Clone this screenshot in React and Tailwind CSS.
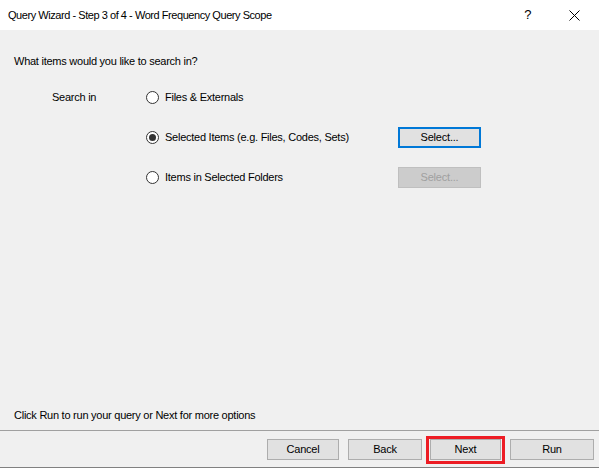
import React from "react";

function Radio({ checked }) {
  return (
    <span className="flex h-[13px] w-[13px] items-center justify-center rounded-full border border-[#333333] bg-white">
      {checked && <span className="h-[7px] w-[7px] rounded-full bg-[#333333]" />}
    </span>
  );
}

function Btn({ children, className = "", disabled, focused }) {
  let look = "border border-[#adadad] bg-[#e1e1e1] text-black ";
  if (disabled) look = "border border-[#bfbfbf] bg-[#cccccc] text-[#a0a0a0] ";
  if (focused) look = "border-2 border-[#0078d7] bg-[#e1e1e1] text-black ";
  return (
    <button
      className={
        "flex h-[21px] items-center justify-center text-[11px] leading-none tracking-[-0.2px] " +
        look +
        className
      }
    >
      {children}
    </button>
  );
}

export default function App() {
  const options = [
    { label: "Files & Externals", checked: false },
    { label: "Selected Items (e.g. Files, Codes, Sets)", checked: true, btn: "active" },
    { label: "Items in Selected Folders", checked: false, btn: "disabled" },
  ];

  return (
    <div
      className="flex h-[468px] w-[599px] flex-col bg-[#f0f0f0] text-[11px] tracking-[-0.25px] text-black"
      style={{ fontFamily: '"Liberation Sans", Arial, sans-serif' }}
    >
      {/* title bar */}
      <div className="flex h-[30px] shrink-0 items-center bg-white pl-[8px] text-[11px] tracking-[-0.45px]">
        <span className="flex-1">Query Wizard - Step 3 of 4 - Word Frequency Query Scope</span>
        <span className="mr-[38px] text-[13px]">?</span>
        <svg width="11" height="11" viewBox="0 0 11 11" className="mr-[19px]">
          <path d="M0.5 0.5 L10.5 10.5 M10.5 0.5 L0.5 10.5" stroke="#000" strokeWidth="1" />
        </svg>
      </div>

      {/* body */}
      <div className="flex flex-1 flex-col pl-[14px] pt-[23px] pb-[7px]">
        <div className="h-[16px] leading-[16px]">What items would you like to search in?</div>

        <div className="mt-[18px] flex flex-col gap-[20px]">
          {options.map((o, i) => (
            <div key={o.label} className="flex h-[20px] items-center">
              <span className="w-[132px] pl-[38px]">{i === 0 ? "Search in" : ""}</span>
              <Radio checked={o.checked} />
              <span className="ml-[6px] w-[233px]">{o.label}</span>
              {o.btn === "active" && (
                <Btn className="w-[83px]" focused>
                  Select...
                </Btn>
              )}
              {o.btn === "disabled" && (
                <Btn className="w-[83px]" disabled>
                  Select...
                </Btn>
              )}
            </div>
          ))}
        </div>

        <div className="mt-auto h-[16px] leading-[16px]">
          Click Run to run your query or Next for more options
        </div>
      </div>

      {/* buttons */}
      <div className="flex h-[38px] shrink-0 items-center justify-end border-t border-b border-t-[#a0a0a0] border-b-[#808080] pr-[5px]">
        <Btn className="w-[72px]">Cancel</Btn>
        <Btn className="ml-[9px] w-[74px]">Back</Btn>
        <div className="relative ml-[8px]">
          <Btn className="w-[71px]">Next</Btn>
          <div className="absolute -top-[3px] -bottom-[4px] -left-[4px] -right-[4px] border-[3px] border-[#ed1c24]" />
        </div>
        <Btn className="ml-[9px] w-[84px]">Run</Btn>
      </div>
    </div>
  );
}
